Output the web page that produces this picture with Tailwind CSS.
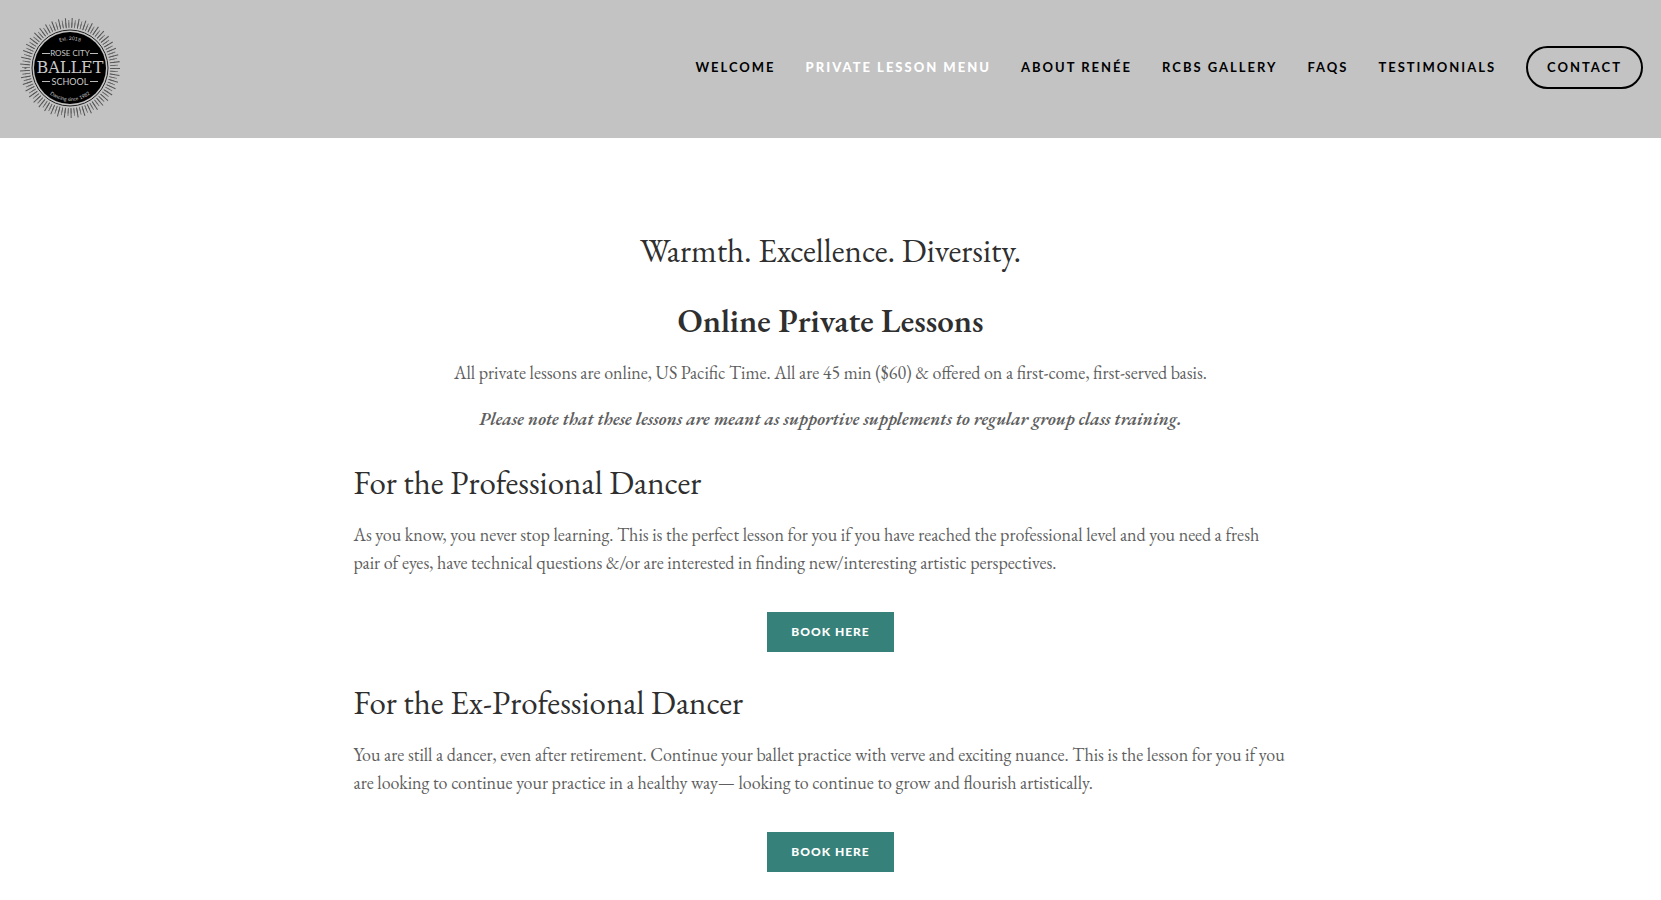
<!DOCTYPE html>
<html lang="en">
<head>
<meta charset="utf-8">
<meta name="viewport" content="width=device-width, initial-scale=1">
<title>Private Lesson Menu — Rose City Ballet School</title>
<script src="https://cdn.jsdelivr.net/npm/@tailwindcss/browser@4"></script>
</head>
<body class="bg-white font-['EB_Garamond','Liberation_Serif',serif] text-[18px] leading-[28px] text-[#5f5f5f]">
<header class="flex items-center justify-between bg-[#c3c3c3] pt-[18px] pr-[18px] pb-5 pl-5">
  <a href="#" aria-label="Rose City Ballet School" class="block shrink-0">
    <svg class="size-[100px]" viewBox="0 0 100 100" font-family="Lato, sans-serif" fill="#c8c8c8" text-anchor="middle">
      <circle cx="50" cy="50" r="43" fill="none" stroke="#555" stroke-width="5" pathLength="360" stroke-dasharray="1 3"/>
      <circle cx="50" cy="50" r="45" fill="none" stroke="#555" stroke-width="10" pathLength="360" stroke-dasharray="1.2 6.8"/>
      <circle cx="50" cy="50" r="44" fill="none" stroke="#686868" stroke-width="8" pathLength="360" stroke-dasharray="1 7" stroke-dashoffset="-4"/>
      <circle cx="50" cy="50" r="38" fill="#c3c3c3" stroke="#222" stroke-width="1"/>
      <circle cx="50" cy="50" r="36" fill="#000"/>
      <path id="top" d="M22 50a28 28 0 0 1 56 0" fill="none"/>
      <path id="bottom" d="M17 50a33 33 0 0 0 66 0" fill="none"/>
      <text font-size="5"><textPath href="#top" startOffset="50%">Est. 2018</textPath></text>
      <text x="50" y="38" font-size="8">ROSE CITY</text>
      <text x="50" y="55" font-size="16" font-family="DejaVu Serif, serif">BALLET</text>
      <text x="50" y="67" font-size="9">SCHOOL</text>
      <path d="M22 35.500h8M70 35.500h8M22 63.500h8M70 63.500h8" stroke="#bbb" stroke-width="1"/>
      <text font-size="5"><textPath href="#bottom" startOffset="50%">Dancing since 1982</textPath></text>
    </svg>
  </a>
  <nav class="flex flex-wrap items-center justify-end gap-x-[30px] pb-[2px] font-['Proxima_Nova',Lato,sans-serif] text-[13px] leading-[18px] font-bold tracking-[2px] text-black uppercase">
    <a href="#">Welcome</a>
    <a href="#" aria-current="page" class="font-black text-white">Private Lesson Menu</a>
    <a href="#">About Renée</a>
    <a href="#">RCBS Gallery</a>
    <a href="#">FAQs</a>
    <a href="#">Testimonials</a>
    <a href="#" class="rounded-[22px] border-2 border-black px-[19px] pt-[10px] pb-[11px]">Contact</a>
  </nav>
</header>
<main class="mx-auto max-w-[986px] px-4 pt-[91px] pb-7">
  <h1 class="text-center text-[33px] leading-[44px] text-[#2f2f2f]">Warmth. Excellence. Diversity.</h1>
  <h2 class="mt-[26px] text-center text-[33px] leading-[44px] font-semibold text-[#2f2f2f]">Online Private Lessons</h2>
  <p class="mt-4 text-center">All private lessons are online, US Pacific Time. All are 45 min ($60) &amp; offered on a first-come, first-served basis.</p>
  <p class="mt-[18px] text-center font-semibold italic">Please note that these lessons are meant as supportive supplements to regular group class training.</p>
  <section class="mt-7">
    <h2 class="text-[33px] leading-[44px] text-[#2f2f2f]">For the Professional Dancer</h2>
    <p class="mt-4">As you know, you never stop learning. This is the perfect lesson for you if you have reached the professional level and you need a fresh pair&nbsp;of eyes, have technical questions &amp;/or are interested in finding new/interesting artistic perspectives.</p>
    <div class="mt-[35px] flex justify-center"><a href="#" class="bg-[#36827b] px-6 py-[10px] font-['Proxima_Nova',Lato,sans-serif] text-[12px] leading-[20px] font-black tracking-[1px] text-white uppercase">Book Here</a></div>
  </section>
  <section class="mt-[29px]">
    <h2 class="text-[33px] leading-[44px] text-[#2f2f2f]">For the Ex-Professional Dancer</h2>
    <p class="mt-4">You are still a dancer, even after retirement. Continue your ballet practice with verve and exciting nuance. This is the lesson for you if you are looking to continue your practice in a healthy way— looking to continue to grow and flourish artistically.</p>
    <div class="mt-[35px] flex justify-center"><a href="#" class="bg-[#36827b] px-6 py-[10px] font-['Proxima_Nova',Lato,sans-serif] text-[12px] leading-[20px] font-black tracking-[1px] text-white uppercase">Book Here</a></div>
  </section>
</main>
</body>
</html>
